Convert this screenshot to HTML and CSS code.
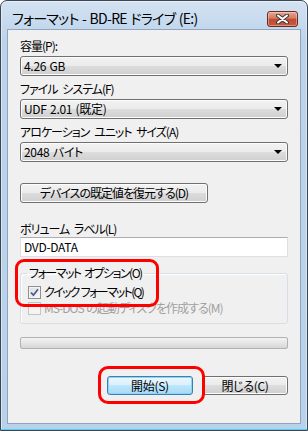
FILE: index.html
```html
<!DOCTYPE html>
<html lang="ja">

<head>
  <meta charset="UTF-8">
  <title>フォーマット - BD-RE ドライブ (E:)</title>
  <link rel="stylesheet" href="styles.css">
</head>

<body>
  <div class="window">
    <!-- タイトルバー -->
    <div class="titlebar">
      <span class="title">フォーマット - BD-RE ドライブ (E:)</span>
      <button class="close" title="閉じる">
        <svg width="13" height="10" viewBox="0 0 13 10">
          <path d="M2 1.5 L11 8.5 M11 1.5 L2 8.5" stroke="#3b3b3b" stroke-width="4" stroke-linecap="round" />
          <path d="M2 1.5 L11 8.5 M11 1.5 L2 8.5" stroke="#fff" stroke-width="2" stroke-linecap="round" />
        </svg>
      </button>
    </div>

    <!-- 本体 -->
    <div class="client">
      <div class="field first">
        <div class="label">容量(P):</div>
        <div class="combo"><span>4.26 GB</span><i class="arrow"></i></div>
      </div>
      <div class="field">
        <div class="label">ファイル システム(F)</div>
        <div class="combo"><span>UDF 2.01 (既定)</span><i class="arrow"></i></div>
      </div>
      <div class="field">
        <div class="label">アロケーション ユニット サイズ(A)</div>
        <div class="combo"><span>2048 バイト</span><i class="arrow"></i></div>
      </div>

      <button class="btn restore">デバイスの既定値を復元する(D)</button>

      <div class="field volume">
        <div class="label">ボリューム ラベル(L)</div>
        <div class="textbox">DVD-DATA</div>
      </div>

      <fieldset class="group">
        <legend>フォーマット オプション(O)</legend>
        <div class="check">
          <span class="box">
            <svg width="9" height="9" viewBox="0 0 9 9">
              <path d="M1 4.5 L3.4 7.2 L8 1.2" fill="none" stroke="#4a5f97" stroke-width="1.8" />
            </svg>
          </span>
          クイック フォーマット(Q)
        </div>
        <div class="check disabled">
          <span class="box"></span>
          MS-DOS の起動ディスクを作成する(M)
        </div>
      </fieldset>

      <div class="progress"></div>

      <div class="actions">
        <button class="btn default">開始(S)</button>
        <button class="btn">閉じる(C)</button>
      </div>
    </div>

    <!-- 赤い囲み -->
    <div class="mark mark-options"></div>
    <div class="mark mark-start"></div>
  </div>
</body>

</html>
```

FILE: styles.css
```css
/* 全体 */
body {
  margin: 0;
  overflow: hidden;
  background: #fff;
  font-family: "Noto Sans CJK JP", "Liberation Sans", sans-serif;
  font-size: 12px;
  font-feature-settings: "palt";
  letter-spacing: -1px;
  word-spacing: 3px;
  color: #000;
}

/* ウィンドウ枠 */
.window {
  position: relative;
  box-sizing: border-box;
  width: 308px;
  height: 431px;
  border: 1px solid #3c4552;
  border-radius: 7px 7px 0 0;
  padding: 0 6px 6px 6px;
  background: linear-gradient(#d3e2f2, #bcd3eb 40px, #b9d1ea);
  box-shadow: inset 0 -1px 0 #4fd0f2, inset 0 0 0 1px rgba(255, 255, 255, 0.45);
  display: flex;
  flex-direction: column;
}

/* タイトルバー */
.titlebar {
  height: 28px;
  display: flex;
  align-items: flex-start;
}

.title {
  padding: 8px 0 0 5px;
  font-size: 14px;
  line-height: 18px;
  letter-spacing: -0.7px;
  word-spacing: 1px;
}

.close {
  margin: 10px 3px 0 auto;
  width: 31px;
  height: 16px;
  padding: 0;
  border: 1px solid #6b2a1f;
  border-radius: 3px;
  background: linear-gradient(#e8a491, #d27a62 45%, #c24a31 50%, #c8583c);
  box-shadow: inset 0 0 0 1px rgba(255, 255, 255, 0.35);
  display: flex;
  align-items: center;
  justify-content: center;
}

/* クライアント領域 */
.client {
  flex: 1;
  border: 1px solid #8ea4bf;
  background: #f0f0f0;
  padding: 8px 12px 0 12px;
}

.field {
  margin-top: 5px;
}

.field.first {
  margin-top: 0;
}

.label {
  line-height: 16px;
  margin-bottom: 2px;
  white-space: nowrap;
}

/* コンボボックス */
.combo {
  box-sizing: border-box;
  height: 20px;
  border: 1px solid #707070;
  border-radius: 3px;
  background: linear-gradient(#f2f2f2, #ebebeb 50%, #dddddd 50%, #cfcfcf);
  box-shadow: inset 0 0 0 1px #fcfcfc;
  display: flex;
  align-items: center;
  padding: 0 4px 0 3px;
  line-height: 16px;
  letter-spacing: -0.3px;
  word-spacing: 1px;
}

.combo span {
  flex: 1;
}

.arrow {
  width: 0;
  height: 0;
  border-left: 4px solid transparent;
  border-right: 4px solid transparent;
  border-top: 4px solid #000;
  margin-right: 1px;
}

/* ボタン */
.btn {
  box-sizing: border-box;
  height: 20px;
  padding: 0;
  font: inherit;
  font-feature-settings: "palt";
  letter-spacing: -1px;
  line-height: 16px;
  color: #000;
  border: 1px solid #707070;
  border-radius: 3px;
  background: linear-gradient(#f2f2f2, #ebebeb 50%, #dddddd 50%, #cfcfcf);
  box-shadow: inset 0 0 0 1px #fcfcfc;
}

.restore {
  display: block;
  width: 188px;
  margin-top: 21px;
}

.actions .btn {
  width: 86px;
  height: 19px;
  letter-spacing: -0.3px;
}

.btn.default {
  border-color: #3c7fb1;
  background: linear-gradient(#eaf6fd, #d9f0fc 50%, #bee6fd 50%, #a7d9f5);
  box-shadow: inset 0 0 0 1px #8fd4f5;
}

/* テキストボックス */
.volume {
  margin-top: 18px;
}

.volume .label {
  margin-bottom: 0;
}

.textbox {
  box-sizing: border-box;
  height: 20px;
  border: 1px solid #dbdfe6;
  border-top-color: #abadb3;
  background: #fff;
  padding: 0 3px;
  line-height: 18px;
  letter-spacing: -0.3px;
}

/* グループ */
.group {
  margin: 8px 0 0 0;
  padding: 3px 7px 7px 7px;
  border: 1px solid #d5dfe5;
  border-radius: 3px;
  box-shadow: inset 1px 1px 0 #fff;
}

.group legend {
  padding: 0 2px;
  margin-left: -1px;
  line-height: 16px;
  letter-spacing: -1.5px;
  word-spacing: 2px;
}

.check {
  display: flex;
  align-items: center;
  gap: 3px;
  line-height: 16px;
  white-space: nowrap;
  letter-spacing: -1.7px;
  word-spacing: 1px;
}

.box {
  box-sizing: border-box;
  width: 13px;
  height: 13px;
  border: 1px solid #8e8f8f;
  background: linear-gradient(135deg, #dcdcdc, #fbfbfb);
  box-shadow: inset 0 0 0 1px #f4f4f4;
  display: flex;
  align-items: center;
  justify-content: center;
}

.check.disabled {
  color: #a0a0a0;
  letter-spacing: -1px;
}

.check.disabled .box {
  border-color: #c4c4c4;
  background: #f4f4f4;
}

/* プログレスバー */
.progress {
  box-sizing: border-box;
  height: 12px;
  margin-top: 13px;
  border: 1px solid #b2b2b2;
  border-radius: 2px;
  background: linear-gradient(#f3f3f3, #e6e6e6 50%, #d6d6d6);
}

/* 下のボタン */
.actions {
  display: flex;
  justify-content: flex-end;
  gap: 9px;
  margin-top: 27px;
}

/* 赤い囲み */
.mark {
  position: absolute;
  box-sizing: border-box;
  border: 3px solid #f00;
  border-radius: 9px;
}

.mark-options {
  left: 14px;
  top: 258px;
  width: 144px;
  height: 48px;
}

.mark-start {
  left: 97px;
  top: 365px;
  width: 107px;
  height: 38px;
  border-radius: 10px;
}
```
